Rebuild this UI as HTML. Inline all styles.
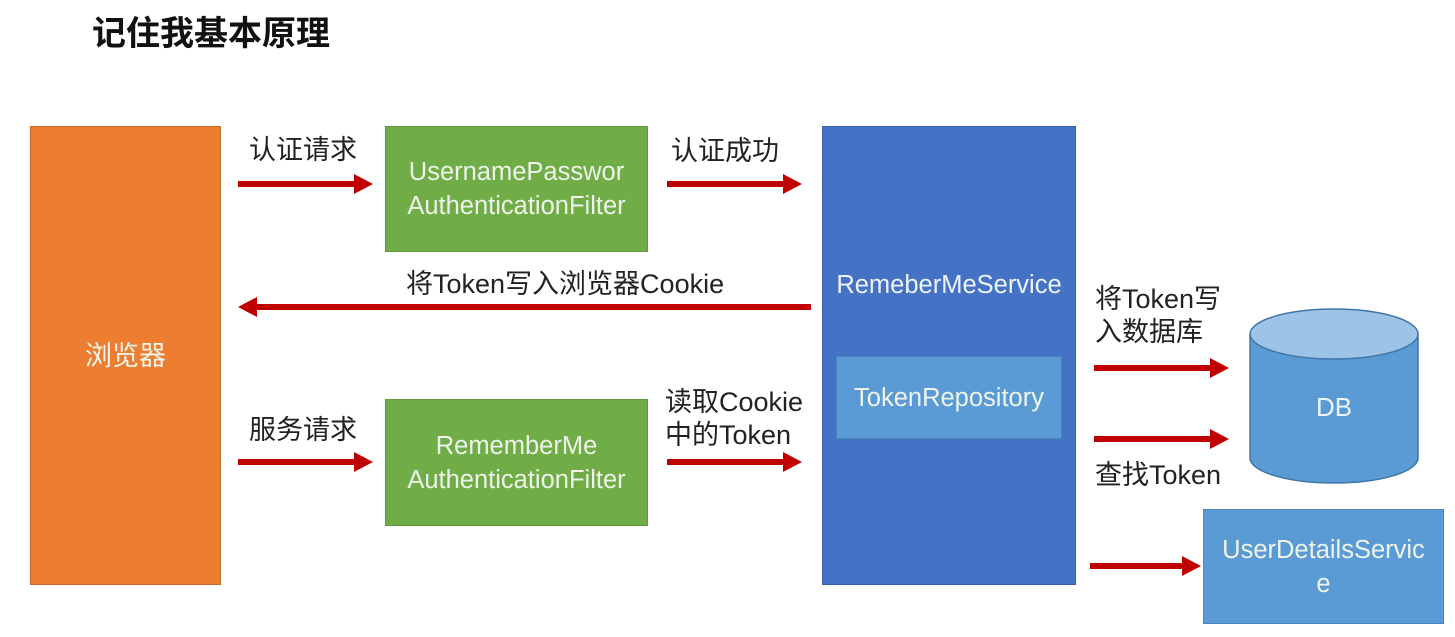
<!DOCTYPE html>
<html><head><meta charset="utf-8"><style>
body{margin:0;width:1455px;height:637px;background:#fff;position:relative;overflow:hidden;font-family:"Liberation Sans","Noto Sans CJK SC",sans-serif;}
.a{position:absolute;box-sizing:border-box;}
.box{display:flex;align-items:center;justify-content:center;text-align:center;color:#eef4ea;font-size:25.5px;line-height:34px;}
.t{position:absolute;font-size:27px;color:#222;line-height:33px;white-space:nowrap;}
</style></head><body>
<div class="t" style="left:92px;top:14px;font-size:34px;font-weight:bold;line-height:40px;color:#111">记住我基本原理</div>
<div class="a box" style="left:30px;top:126px;width:191px;height:459px;background:#ED7D31;border:1px solid #c8692a;font-size:27px">浏览器</div>
<div class="a box" style="left:385px;top:126px;width:263px;height:126px;background:#70AD47;border:1px solid #5f9a3c;">UsernamePasswor<br>AuthenticationFilter</div>
<div class="a box" style="left:385px;top:399px;width:263px;height:127px;background:#70AD47;border:1px solid #5f9a3c;">RememberMe<br>AuthenticationFilter</div>
<div class="a" style="left:822px;top:126px;width:254px;height:459px;background:#4472C4;border:1px solid #3a62a8;"></div>
<div class="t" style="left:822px;top:269px;width:254px;text-align:center;color:#eef2fa;font-size:25.5px">RemeberMeService</div>
<div class="a box" style="left:836px;top:356px;width:226px;height:83px;background:#5B9BD5;border:1px solid #4a86bd;">TokenRepository</div>
<div class="a box" style="left:1203px;top:509px;width:241px;height:115px;background:#5B9BD5;border:1px solid #4a86bd;">UserDetailsServic<br>e</div>
<svg class="a" style="left:0;top:0" width="1455" height="637">
<g fill="#5B9BD5" stroke="#3f76a8" stroke-width="1.5">
<path d="M1250,334 V458 A84,25 0 0 0 1418,458 V334"/>
<ellipse cx="1334" cy="334" rx="84" ry="25" fill="#9dc3e6"/>
</g>
<text x="1334" y="416" text-anchor="middle" fill="#eef4fa" font-size="26" font-family="Liberation Sans">DB</text>
<g fill="#C00000">
<rect x="238" y="181" width="118" height="6"/><polygon points="354,174 373,184 354,194"/>
<rect x="667" y="181" width="118" height="6"/><polygon points="783,174 802,184 783,194"/>
<rect x="255" y="304" width="556" height="6"/><polygon points="257,297 238,307 257,317"/>
<rect x="238" y="459" width="118" height="6"/><polygon points="354,452 373,462 354,472"/>
<rect x="667" y="459" width="118" height="6"/><polygon points="783,452 802,462 783,472"/>
<rect x="1094" y="365" width="118" height="6"/><polygon points="1210,358 1229,368 1210,378"/>
<rect x="1094" y="436" width="118" height="6"/><polygon points="1210,429 1229,439 1210,449"/>
<rect x="1090" y="563" width="94" height="6"/><polygon points="1182,556 1201,566 1182,576"/>
</g>
</svg>
<div class="t" style="left:249px;top:134px">认证请求</div>
<div class="t" style="left:671px;top:135px">认证成功</div>
<div class="t" style="left:406px;top:268px">将Token写入浏览器Cookie</div>
<div class="t" style="left:249px;top:414px">服务请求</div>
<div class="t" style="left:665px;top:386px">读取Cookie<br>中的Token</div>
<div class="t" style="left:1095px;top:283px">将Token写<br>入数据库</div>
<div class="t" style="left:1095px;top:459px">查找Token</div>
</body></html>
